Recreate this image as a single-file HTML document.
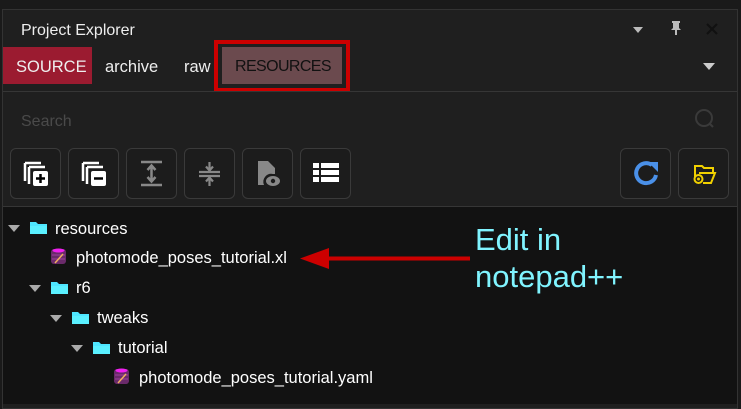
<!DOCTYPE html><html><head><style>
*{margin:0;padding:0;box-sizing:border-box}
body{width:741px;height:404px;background:#1a1a1a;font-family:"Liberation Sans",sans-serif;position:relative;overflow:hidden}
.a{position:absolute}
.panel{left:2px;top:9px;width:736px;height:400px;background:#1f1f1f;border:1px solid #333}
.btn{position:absolute;top:148px;width:51px;height:51px;border:1px solid #3a3a3a;border-radius:6px;background:#1c1c1c}
.t{position:absolute;color:#fff;font-size:16px}
.tri{position:absolute;width:0;height:0;border-left:6px solid transparent;border-right:6px solid transparent;border-top:7px solid #aaa}
</style></head><body>
<div class="a panel"></div>
<div class="t" style="left:21px;top:22px;color:#eee">Project Explorer</div>
<div class="tri" style="left:633px;top:27px;border-top-color:#bbb;border-left-width:5px;border-right-width:5px;border-top-width:6px"></div>
<svg class="a" style="left:668px;top:20px" width="16" height="16"><path d="M4 1h8v2h-1v5l2 2H3l2-2V3H4z M7 10h2v5H7z" fill="#bbb"/></svg>
<svg class="a" style="left:705px;top:22px" width="14" height="14"><path d="M2 2L12 12M12 2L2 12" stroke="#111" stroke-width="2.2"/></svg>
<div class="a" style="left:3px;top:47px;width:89px;height:37px;background:#9b1b30"></div>
<div class="t" style="left:16px;top:58px;font-size:16.5px;color:#eee">SOURCE</div>
<div class="t" style="left:105px;top:58px;font-size:16.5px;color:#eee">archive</div>
<div class="t" style="left:184px;top:58px;font-size:16.5px;color:#eee">raw</div>
<div class="a" style="left:214px;top:40px;width:136px;height:52px;border:4px solid #cc0000"></div>
<div class="a" style="left:222px;top:47px;width:120px;height:37px;background:#6b4a4e"></div>
<div class="t" style="left:235px;top:58px;font-size:16px;letter-spacing:-0.6px;color:#111">RESOURCES</div>
<div class="tri" style="left:703px;top:63px;border-top-color:#ccc"></div>
<div class="a" style="left:3px;top:91px;width:734px;height:1px;background:#363636"></div>
<div class="t" style="left:21px;top:113px;color:#4a4a4a">Search</div>
<svg class="a" style="left:694px;top:108px" width="24" height="24"><circle cx="10" cy="10" r="8" stroke="#3a3a3a" stroke-width="2" fill="none"/><path d="M16 16l3 3" stroke="#3a3a3a" stroke-width="2"/></svg>
<div class="btn" style="left:10px"><svg width="49" height="49"><path d="M14 14v18M14 14h16M18 18v17M18 18h16" stroke="#fff" stroke-width="2.5" fill="none"/><rect x="22" y="22" width="15" height="15" rx="2" fill="#fff"/><path d="M29.5 25v9M25 29.5h9" stroke="#000" stroke-width="2.5"/></svg></div>
<div class="btn" style="left:68px"><svg width="49" height="49"><path d="M14 14v18M14 14h16M18 18v17M18 18h16" stroke="#fff" stroke-width="2.5" fill="none"/><rect x="22" y="22" width="15" height="15" rx="2" fill="#fff"/><path d="M25 29.5h9" stroke="#000" stroke-width="2.5"/></svg></div>
<div class="btn" style="left:126px"><svg width="49" height="49"><path d="M14 13h21M14 36h21M24.5 17v15M20.5 21l4-4.5 4 4.5M20.5 28l4 4.5 4-4.5" stroke="#888" stroke-width="2.5" fill="none"/></svg></div>
<div class="btn" style="left:184px"><svg width="49" height="49"><path d="M14 23h21M14 27h21M24.5 13v8M21 17.5l3.5 4 3.5-4M24.5 29v8M21 32.5l3.5-4 3.5 4" stroke="#888" stroke-width="2.2" fill="none"/></svg></div>
<div class="btn" style="left:242px"><svg width="49" height="49"><path d="M15 12h10l7 7v6h-2a8 8 0 0 0-9 11h-6z" fill="#888"/><ellipse cx="30" cy="32" rx="7" ry="5" fill="#888"/><circle cx="30" cy="32" r="2.2" fill="#1c1c1c"/></svg></div>
<div class="btn" style="left:300px"><svg width="49" height="49"><g fill="#fff"><rect x="12" y="14" width="6" height="5"/><rect x="20" y="14" width="18" height="5"/><rect x="12" y="21" width="6" height="5"/><rect x="20" y="21" width="18" height="5"/><rect x="12" y="28" width="6" height="5"/><rect x="20" y="28" width="18" height="5"/></g></svg></div>
<div class="btn" style="left:620px"><svg width="49" height="49"><path d="M31 16a10 10 0 1 0 4 10" stroke="#4a90e8" stroke-width="4" fill="none"/><path d="M27 13h10v10z" fill="#4a90e8"/></svg></div>
<div class="btn" style="left:678px"><svg width="49" height="49"><path d="M16 28v-11h7l2 2h9v4M24 34h8l4-10H20" stroke="#f0d000" stroke-width="2" fill="none"/><circle cx="19.5" cy="30" r="4" stroke="#f0d000" stroke-width="2" fill="none"/><circle cx="19.5" cy="30" r="1.5" fill="#f0d000"/></svg></div>
<div class="a" style="left:3px;top:206px;width:734px;height:198px;background:#121212;border-top:1px solid #363636"></div>
<svg width="0" height="0" style="position:absolute"><defs><g id="f"><path d="M1 3h6l2 2h9v10H1z" fill="#4ee6ff"/><path d="M1 7h17v8H1z" fill="#5af0ff"/></g><g id="d"><rect x="2" y="3" width="15" height="15" rx="3" fill="#6a2a6a"/><ellipse cx="9.5" cy="4.5" rx="6" ry="2" fill="#f020f0"/><path d="M3 9h13M3 13h13" stroke="#a040a0"/><path d="M6 17l8-9" stroke="#f0b060" stroke-width="1.5"/></g></defs></svg>
<div class="tri" style="left:8px;top:225px"></div>
<svg class="a" style="left:29px;top:219px" width="20" height="18"><use href="#f"/></svg>
<div class="t" style="left:55px;top:220px;font-size:16.5px">resources</div>
<svg class="a" style="left:49px;top:246px" width="20" height="20"><use href="#d"/></svg>
<div class="t" style="left:76px;top:249px;font-size:16.5px">photomode_poses_tutorial.xl</div>
<div class="tri" style="left:29px;top:285px"></div>
<svg class="a" style="left:50px;top:279px" width="20" height="18"><use href="#f"/></svg>
<div class="t" style="left:76px;top:279px;font-size:16.5px">r6</div>
<div class="tri" style="left:50px;top:315px"></div>
<svg class="a" style="left:71px;top:309px" width="20" height="18"><use href="#f"/></svg>
<div class="t" style="left:97px;top:309px;font-size:16.5px">tweaks</div>
<div class="tri" style="left:71px;top:345px"></div>
<svg class="a" style="left:92px;top:339px" width="20" height="18"><use href="#f"/></svg>
<div class="t" style="left:118px;top:339px;font-size:16.5px">tutorial</div>
<svg class="a" style="left:112px;top:366px" width="20" height="20"><use href="#d"/></svg>
<div class="t" style="left:139px;top:369px;font-size:16.5px">photomode_poses_tutorial.yaml</div>
<svg class="a" style="left:295px;top:247px" width="175" height="22"><path d="M30 9.5h146v4H30z" fill="#cc0000"/><path d="M5 11.5L34 1v21z" fill="#cc0000"/></svg>
<div class="a" style="left:475px;top:221px;color:#80f4ff;font-size:31px;line-height:37px">Edit in<br>notepad++</div>
</body></html>
